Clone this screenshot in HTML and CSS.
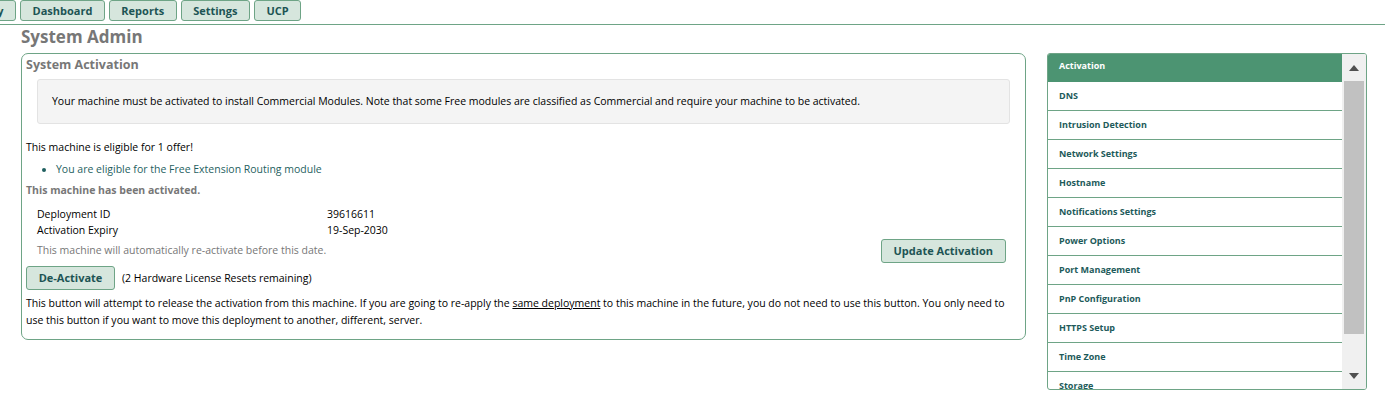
FILE: index.html
```html
<!DOCTYPE html>
<html>
<head>
<meta charset="utf-8">
<link rel="stylesheet" href="styles.css">
</head>
<body>
<nav class="topnav">
  <div class="tab-clip"><span class="tab">Connectivity</span></div>
  <span class="tab">Dashboard</span>
  <span class="tab">Reports</span>
  <span class="tab">Settings</span>
  <span class="tab">UCP</span>
</nav>
<div class="layout">
  <div class="main">
    <h1 class="page-title">System Admin</h1>
    <section class="box">
      <h2 class="box-title">System Activation</h2>
      <div class="well">Your machine must be activated to install Commercial Modules. Note that some Free modules are classified as Commercial and require your machine to be activated.</div>
      <p class="line offer">This machine is eligible for 1 offer!</p>
      <ul class="offers">
        <li>You are eligible for the Free Extension Routing module</li>
      </ul>
      <p class="activated">This machine has been activated.</p>
      <div class="details">
        <div class="kv"><span class="k">Deployment ID</span><span class="v">39616611</span></div>
        <div class="kv"><span class="k">Activation Expiry</span><span class="v">19-Sep-2030</span></div>
        <div class="note-row">
          <span class="note">This machine will automatically re-activate before this date.</span>
          <button class="btn btn-update">Update Activation</button>
        </div>
      </div>
      <div class="deact-row">
        <button class="btn btn-deact">De-Activate</button>
        <span class="resets">(2 Hardware License Resets remaining)</span>
      </div>
      <p class="explain">This button will attempt to release the activation from this machine. If you are going to re-apply the <u>same deployment</u> to this machine in the future, you do not need to use this button. You only need to use this button if you want to move this deployment to another, different, server.</p>
    </section>
  </div>
  <aside class="side">
    <div class="side-list">
      <div class="side-item active">Activation</div>
      <div class="side-item">DNS</div>
      <div class="side-item">Intrusion Detection</div>
      <div class="side-item">Network Settings</div>
      <div class="side-item">Hostname</div>
      <div class="side-item">Notifications Settings</div>
      <div class="side-item">Power Options</div>
      <div class="side-item">Port Management</div>
      <div class="side-item">PnP Configuration</div>
      <div class="side-item">HTTPS Setup</div>
      <div class="side-item">Time Zone</div>
      <div class="side-item">Storage</div>
    </div>
    <div class="scrollbar">
      <div class="sb-btn"><span class="tri-up"></span></div>
      <div class="sb-track"><div class="sb-thumb"></div></div>
      <div class="sb-btn"><span class="tri-down"></span></div>
    </div>
  </aside>
</div>
</body>
</html>
```
FILE: styles.css
```css
* { box-sizing: border-box; }
body {
  margin: 0;
  font-family: "Open Sans", "Liberation Sans", sans-serif;
  font-size: 10.5px;
  color: #000;
  background: #fff;
}
.topnav {
  display: flex;
  gap: 4px;
  height: 25px;
  border-bottom: 1px solid #6ea486;
  align-items: flex-start;
}
.tab-clip {
  width: 16px;
  overflow: hidden;
  display: flex;
  justify-content: flex-end;
  flex: none;
}
.tab {
  flex: none;
  display: block;
  height: 21px;
  padding: 2px 11.5px 0;
  background: #d6e6dd;
  border: 1px solid #6ea486;
  border-radius: 3px;
  color: #1d5454;
  font-weight: bold;
  font-size: 11px;
  line-height: 16px;
}
.layout {
  display: flex;
  padding-left: 21px;
  gap: 21px;
}
.main { width: 1005px; flex: none; }
.page-title {
  margin: 0;
  height: 28px;
  padding-top: 1px;
  font-size: 17px;
  line-height: 22px;
  color: #777;
  font-weight: bold;
}
.box {
  border: 1px solid #6ea486;
  border-radius: 7px;
  padding: 2px 4px 10px 4px;
}
.box-title {
  margin: 0;
  font-size: 12.5px;
  line-height: 18px;
  color: #777;
  font-weight: bold;
}
.well {
  margin: 5px 11px 0 11px;
  background: #f4f4f4;
  border: 1px solid #e3e3e3;
  border-radius: 3px;
  padding: 13px 14px 14px;
  line-height: 16px;
}
.line { margin: 0; }
.offer { margin-top: 15px; line-height: 17px; }
.offers {
  margin: 5px 0 0;
  padding-left: 30px;
  color: #1f5f5f;
  line-height: 17px;
}
.activated {
  margin: 4px 0 0;
  color: #777;
  font-weight: bold;
  line-height: 17px;
}
.details { padding: 7px 15px 0 11px; }
.kv { display: flex; line-height: 16px; }
.k { width: 290px; flex: none; }
.note-row {
  display: flex;
  justify-content: space-between;
  align-items: flex-start;
  margin-top: 5px;
}
.note { color: #777; line-height: 14px; }
.btn {
  font-family: "Open Sans", "Liberation Sans", sans-serif;
  font-weight: bold;
  font-size: 11px;
  color: #1d5454;
  background: #d6e6dd;
  border: 1px solid #6ea486;
  border-radius: 3px;
  height: 24px;
  padding: 0 12px;
  line-height: 22px;
}
.btn-update { margin-top: -4px; }
.deact-row {
  display: flex;
  align-items: center;
  gap: 7px;
  margin-top: 3px;
}
.btn-deact { width: 89px; padding: 0; }
.explain {
  margin: 5px 0 0;
  line-height: 17px;
}
.side {
  width: 320px;
  height: 337px;
  margin-top: 28px;
  border: 1px solid #6ea486;
  border-radius: 3px;
  display: flex;
  overflow: hidden;
  flex: none;
}
.side-list {
  flex: 1;
  overflow: hidden;
}
.side-item {
  height: 29px;
  border-bottom: 1px solid #6ea486;
  padding-left: 11px;
  font-size: 9px;
  font-weight: bold;
  color: #1d5a5a;
  line-height: 28px;
}
.side-item.active {
  background: #4c9472;
  color: #fff;
  height: 28px;
  border-bottom: none;
  line-height: 24px;
}
.scrollbar {
  width: 24px;
  background: #f0f0f0;
  display: flex;
  flex-direction: column;
  flex: none;
}
.sb-btn {
  height: 27px;
  display: flex;
  align-items: center;
  justify-content: center;
  flex: none;
}
.sb-track { flex: 1; padding: 0 2px; }
.sb-thumb {
  height: 253px;
  background: #c1c1c1;
}
.tri-up {
  width: 0; height: 0;
  border-left: 5px solid transparent;
  border-right: 5px solid transparent;
  border-bottom: 6px solid #505050;
}
.tri-down {
  width: 0; height: 0;
  border-left: 5px solid transparent;
  border-right: 5px solid transparent;
  border-top: 6px solid #505050;
}
```
